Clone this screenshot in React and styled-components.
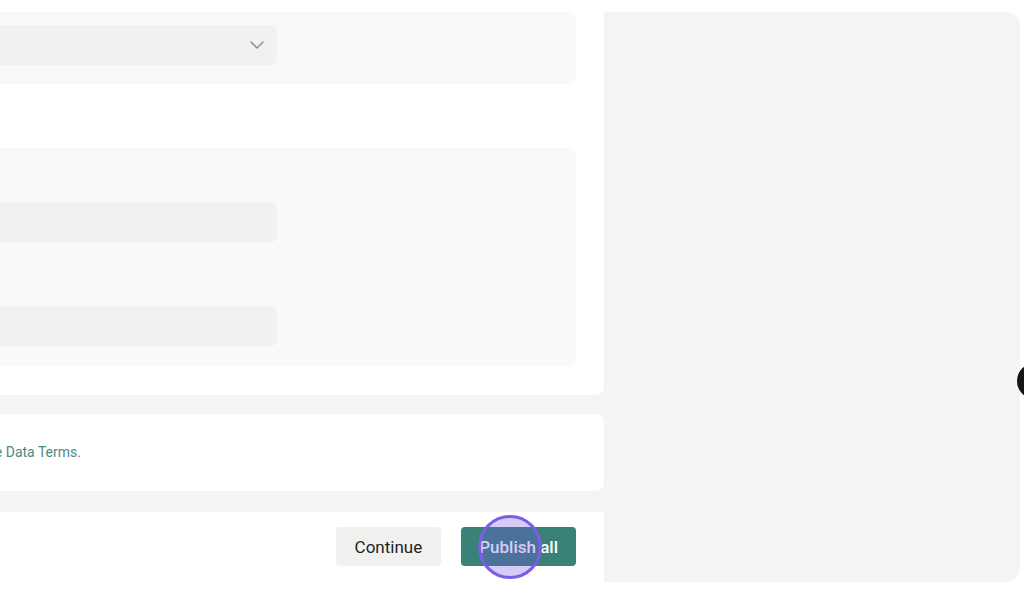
import React from 'react';
import styled, { createGlobalStyle } from 'styled-components';

const GlobalStyle = createGlobalStyle`
  html, body {
    margin: 0;
    padding: 0;
    background: #ffffff;
    overflow: hidden;
    font-family: Roboto, "Liberation Sans", Arial, sans-serif;
  }
`;

const Layout = styled.div`
  display: flex;
  width: 1024px;
  height: 594px;
  overflow: hidden;
`;

const Column = styled.div`
  flex: none;
  width: 904px;
  margin-left: -300px;
  height: 580px;
  background: #f4f4f3;
  display: flex;
  flex-direction: column;
`;

const Card = styled.div`
  background: #ffffff;
  border-radius: ${p => p.$radius || '0 0 8px 0'};
  padding: ${p => p.$pad};
  margin-bottom: ${p => p.$gap || 0}px;
  display: flex;
  flex-direction: column;
`;

const Section = styled.div`
  background: #f9f9f9;
  border-radius: 0 6px 6px 0;
  padding: ${p => p.$pad};
  display: flex;
  flex-direction: column;
  gap: ${p => p.$gap || 0}px;
  margin-bottom: ${p => p.$mb || 0}px;
`;

const Field = styled.div`
  position: relative;
  width: 553px;
  height: 40px;
  background: #f1f1f0;
  border-radius: 6px;
  display: flex;
  align-items: center;
  justify-content: flex-end;
  padding-right: 13px;
  box-sizing: border-box;
`;

const Terms = styled.p`
  margin: 0;
  font-size: 14px;
  line-height: 16px;
  color: #4b8985;
  white-space: nowrap;
  padding-left: ${p => p.$offset}px;
`;

const Footer = styled.div`
  background: #ffffff;
  flex: 1;
  display: flex;
  justify-content: flex-end;
  align-items: flex-start;
  gap: 20px;
  padding: 15px 28px 0 0;
`;

const Button = styled.button`
  position: relative;
  height: 39px;
  padding: 0 ${p => p.$px}px;
  border: none;
  border-radius: 4px;
  font-family: Roboto, "Liberation Sans", Arial, sans-serif;
  font-size: 17px;
  font-weight: ${p => (p.$primary ? 500 : 400)};
  color: ${p => (p.$primary ? '#ffffff' : '#222222')};
  background: ${p => (p.$primary ? '#3a8178' : '#f1f1f0')};
  cursor: pointer;
`;

const Cursor = styled.span`
  position: absolute;
  left: 17px;
  top: -12px;
  width: 58px;
  height: 58px;
  border-radius: 50%;
  border: 3px solid #7c5ce8;
  background: rgba(112, 80, 238, 0.29);
  pointer-events: none;
`;

const Preview = styled.div`
  position: relative;
  flex: none;
  width: 416px;
  height: 570px;
  margin-top: 12px;
  background: #f4f4f3;
  border-radius: 0 14px 14px 0;
`;

const Knob = styled.span`
  position: absolute;
  top: 351px;
  right: -33px;
  width: 36px;
  height: 36px;
  border-radius: 50%;
  background: #151515;
`;

const Chevron = () => (
  <svg width="14" height="8" viewBox="0 0 14 8" fill="none">
    <path d="M1 1l6 6 6-6" stroke="#8a8a8a" strokeWidth="1.4" strokeLinecap="round" strokeLinejoin="round" />
  </svg>
);

export default function App() {
  return (
    <>
      <GlobalStyle />
      <Layout>
        <Column>
          <Card $pad="12px 28px 29px 0" $gap={19}>
            <Section $pad="13px 0 19px 24px" $mb={64}>
              <Field>
                <Chevron />
              </Field>
            </Section>
            <Section $pad="54px 0 20px 24px" $gap={64}>
              <Field />
              <Field />
            </Section>
          </Card>
          <Card $pad="30px 28px 31px 28px" $gap={21} $radius="0 8px 8px 0">
            <Terms $offset={94}>By publishing, you accept the Data Terms.</Terms>
          </Card>
          <Footer>
            <Button $px={19}>Continue</Button>
            <Button $primary $px={18}>
              Publish all
              <Cursor />
            </Button>
          </Footer>
        </Column>
        <Preview>
          <Knob />
        </Preview>
      </Layout>
    </>
  );
}
